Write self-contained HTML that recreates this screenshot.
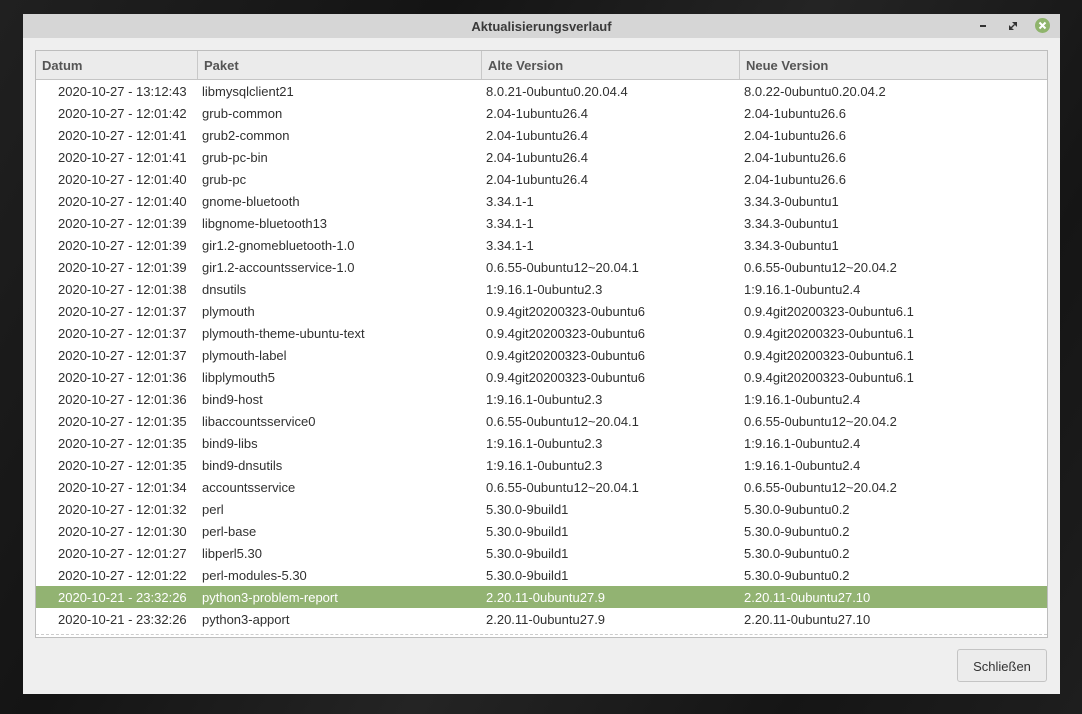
<!DOCTYPE html>
<html><head><meta charset="utf-8"><style>
body{margin:0;width:1082px;height:714px;background:#1c1c1c;position:relative;overflow:hidden;font-family:"Liberation Sans",sans-serif;font-size:13px;color:#303030}
.bg1{position:absolute;left:0;top:0;width:1082px;height:714px;background:linear-gradient(120deg,#202020 0%,#141414 30%,#242424 55%,#151515 80%,#1e1e1e 100%)}
.win{position:absolute;left:23px;top:14px;width:1037px;height:680px;background:#efefef}
.tb{position:absolute;left:0;top:0;width:1037px;height:24px;background:#d6d6d6;text-align:center;line-height:26px;font-weight:bold;color:#3a3a3a;font-size:13px}
.frame{position:absolute;left:12px;top:36px;width:1011px;height:586px;border:1px solid #bdbdbd;background:#fff;overflow:hidden}
.hd{position:absolute;left:0;top:0;width:1011px;height:28px;background:#ebebeb;border-bottom:1px solid #c4c4c4}
.hd div{position:absolute;top:0;height:28px;line-height:30px;font-weight:bold;color:#555;padding-left:6px;box-sizing:border-box;border-right:1px solid #c8c8c8}
.row{position:absolute;left:0;width:1011px;height:22px;line-height:24px;white-space:nowrap}
.row span{position:absolute;top:0}
.sel{background:#92b372;color:#fff}
.btn{position:absolute;left:934px;top:635px;width:88px;height:31px;border:1px solid #c4c4c4;border-radius:3px;background:#ececec;text-align:center;line-height:33px;color:#333}
</style></head><body><div class="bg1"></div>
<div class="win">
<div class="tb">Aktualisierungsverlauf
<div style="position:absolute;left:957px;top:11px;width:6px;height:2px;background:#333"></div>
<svg style="position:absolute;left:986px;top:8px" width="8" height="8"><path d="M0 8L4 8L0 4ZM8 0L4 0L8 4Z M2 6L6 2" stroke="#333" stroke-width="1.4" fill="#333"/></svg>
<div style="position:absolute;left:1012px;top:4px;width:15px;height:15px;border-radius:50%;background:#8fb46c"></div>
<svg style="position:absolute;left:1015px;top:7px" width="9" height="9"><path d="M1.5 1.5L7.5 7.5M7.5 1.5L1.5 7.5" stroke="#fff" stroke-width="2"/></svg>
</div>
<div class="frame">
<div class="hd"><div style="left:0;width:162px">Datum</div><div style="left:162px;width:284px">Paket</div><div style="left:446px;width:258px">Alte Version</div><div style="left:704px;width:307px;border:0">Neue Version</div></div>
<div id="rows"></div>
<div style="position:absolute;left:0;top:583px;width:1011px;border-top:1px dashed #ccc"></div>
</div>
<div class="btn">Schließen</div>
</div>
<script>
var d=[["2020-10-27 - 13:12:43","libmysqlclient21","8.0.21-0ubuntu0.20.04.4","8.0.22-0ubuntu0.20.04.2"],
["2020-10-27 - 12:01:42","grub-common","2.04-1ubuntu26.4","2.04-1ubuntu26.6"],
["2020-10-27 - 12:01:41","grub2-common","2.04-1ubuntu26.4","2.04-1ubuntu26.6"],
["2020-10-27 - 12:01:41","grub-pc-bin","2.04-1ubuntu26.4","2.04-1ubuntu26.6"],
["2020-10-27 - 12:01:40","grub-pc","2.04-1ubuntu26.4","2.04-1ubuntu26.6"],
["2020-10-27 - 12:01:40","gnome-bluetooth","3.34.1-1","3.34.3-0ubuntu1"],
["2020-10-27 - 12:01:39","libgnome-bluetooth13","3.34.1-1","3.34.3-0ubuntu1"],
["2020-10-27 - 12:01:39","gir1.2-gnomebluetooth-1.0","3.34.1-1","3.34.3-0ubuntu1"],
["2020-10-27 - 12:01:39","gir1.2-accountsservice-1.0","0.6.55-0ubuntu12~20.04.1","0.6.55-0ubuntu12~20.04.2"],
["2020-10-27 - 12:01:38","dnsutils","1:9.16.1-0ubuntu2.3","1:9.16.1-0ubuntu2.4"],
["2020-10-27 - 12:01:37","plymouth","0.9.4git20200323-0ubuntu6","0.9.4git20200323-0ubuntu6.1"],
["2020-10-27 - 12:01:37","plymouth-theme-ubuntu-text","0.9.4git20200323-0ubuntu6","0.9.4git20200323-0ubuntu6.1"],
["2020-10-27 - 12:01:37","plymouth-label","0.9.4git20200323-0ubuntu6","0.9.4git20200323-0ubuntu6.1"],
["2020-10-27 - 12:01:36","libplymouth5","0.9.4git20200323-0ubuntu6","0.9.4git20200323-0ubuntu6.1"],
["2020-10-27 - 12:01:36","bind9-host","1:9.16.1-0ubuntu2.3","1:9.16.1-0ubuntu2.4"],
["2020-10-27 - 12:01:35","libaccountsservice0","0.6.55-0ubuntu12~20.04.1","0.6.55-0ubuntu12~20.04.2"],
["2020-10-27 - 12:01:35","bind9-libs","1:9.16.1-0ubuntu2.3","1:9.16.1-0ubuntu2.4"],
["2020-10-27 - 12:01:35","bind9-dnsutils","1:9.16.1-0ubuntu2.3","1:9.16.1-0ubuntu2.4"],
["2020-10-27 - 12:01:34","accountsservice","0.6.55-0ubuntu12~20.04.1","0.6.55-0ubuntu12~20.04.2"],
["2020-10-27 - 12:01:32","perl","5.30.0-9build1","5.30.0-9ubuntu0.2"],
["2020-10-27 - 12:01:30","perl-base","5.30.0-9build1","5.30.0-9ubuntu0.2"],
["2020-10-27 - 12:01:27","libperl5.30","5.30.0-9build1","5.30.0-9ubuntu0.2"],
["2020-10-27 - 12:01:22","perl-modules-5.30","5.30.0-9build1","5.30.0-9ubuntu0.2"],
["2020-10-21 - 23:32:26","python3-problem-report","2.20.11-0ubuntu27.9","2.20.11-0ubuntu27.10"],
["2020-10-21 - 23:32:26","python3-apport","2.20.11-0ubuntu27.9","2.20.11-0ubuntu27.10"]];
var h="";d.forEach(function(r,i){h+='<div class="row'+(i==23?' sel':'')+'" style="top:'+(29+i*22)+'px"><span style="left:22px">'+r[0]+'</span><span style="left:166px">'+r[1]+'</span><span style="left:450px">'+r[2]+'</span><span style="left:708px">'+r[3]+'</span></div>'});
document.getElementById("rows").innerHTML=h;
</script>
</body></html>
